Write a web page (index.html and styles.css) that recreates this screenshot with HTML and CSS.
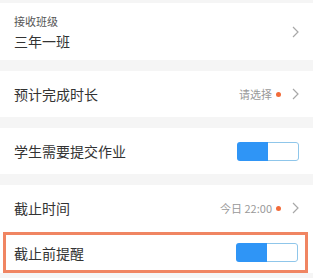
FILE: index.html
```html
<!DOCTYPE html>
<html lang="zh-CN">
<head>
  <meta charset="UTF-8" />
  <meta name="viewport" content="width=device-width, initial-scale=1.0"/>
  <title>布置作业</title>
  <link rel="stylesheet" href="styles.css">
</head>
<body>

  <div class="form-list">

    <!-- 接收班级 -->
    <div class="row row-class">
      <div class="class-info">
        <span class="row-label">接收班级</span>
        <span class="row-title">三年一班</span>
      </div>
      <svg class="chevron" viewBox="0 0 7 12"><path d="M1 1l5 5-5 5" /></svg>
    </div>

    <div class="row">
      <span class="row-title">预计完成时长</span>
      <div class="row-right">
        <span class="row-value">请选择</span>
        <span class="dot"></span>
        <svg class="chevron" viewBox="0 0 7 12"><path d="M1 1l5 5-5 5" /></svg>
      </div>
    </div>

    <div class="row">
      <span class="row-title">学生需要提交作业</span>
      <div class="toggle"><span class="toggle-on"></span><span class="toggle-off"></span></div>
    </div>

    <div class="row-group">
      <div class="row">
        <span class="row-title">截止时间</span>
        <div class="row-right">
          <span class="row-value">今日 22:00</span>
          <span class="dot"></span>
          <svg class="chevron" viewBox="0 0 7 12"><path d="M1 1l5 5-5 5" /></svg>
        </div>
      </div>

      <!-- highlighted -->
      <div class="row row-highlight">
        <span class="row-title">截止前提醒</span>
        <div class="toggle"><span class="toggle-on"></span><span class="toggle-off"></span></div>
      </div>
    </div>

  </div>

</body>
</html>
```

FILE: styles.css
```css
body {
  margin: 0;
  background-color: #f5f5f5;
  font-family: "Noto Sans CJK SC", "Noto Sans", sans-serif;
  color: #333;
}

.form-list {
  display: flex;
  flex-direction: column;
  gap: 11px;
  padding-top: 3px;
}

.row-group {
  display: flex;
  flex-direction: column;
  gap: 1px;
  background: white;
}

.row {
  background: white;
  height: 46px;
  display: flex;
  align-items: center;
  justify-content: space-between;
  padding: 0 14px;
}

.row-class {
  height: 57px;
}

.class-info {
  display: flex;
  flex-direction: column;
  gap: 4px;
}

.row-label {
  font-size: 11px;
  color: #555;
  line-height: 14px;
}

.row-title {
  font-size: 14px;
  line-height: 18px;
  color: #333;
}

.row-right {
  display: flex;
  align-items: center;
}

.row-value {
  font-size: 11px;
  color: #999;
}

.dot {
  width: 5px;
  height: 5px;
  border-radius: 50%;
  background: #f26b3a;
  margin-left: 4px;
  margin-right: 11px;
}

.chevron {
  width: 7px;
  height: 12px;
  fill: none;
  stroke: #a8a8a8;
  stroke-width: 1.2;
}

.toggle {
  display: flex;
  width: 62px;
  height: 19px;
  border-radius: 3px;
  overflow: hidden;
}

.toggle-on {
  flex: 1;
  background: #2f95f6;
}

.toggle-off {
  flex: 1;
  background: white;
  border: 1px solid #8fc6ea;
  border-left: none;
  border-radius: 0 3px 3px 0;
}

.row-highlight {
  margin: 0 5px 0 3px;
  padding: 0 7px 0 8px;
  height: 35px;
  border: 3px solid #f08562;
}
```
